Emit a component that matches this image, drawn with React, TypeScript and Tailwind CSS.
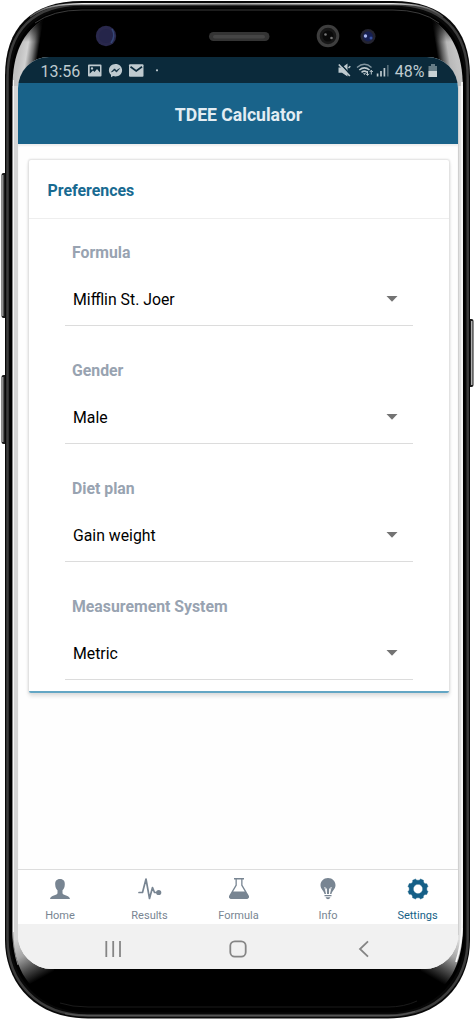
import type { ReactNode } from "react";

function PhoneFrame() {
  return (
    <svg className="absolute inset-0" width="474" height="1019" viewBox="0 0 474 1019" aria-hidden="true">
      <defs>
        <linearGradient id="cornerTL" gradientUnits="userSpaceOnUse" x1="13" y1="50" x2="38" y2="54">
          <stop offset="0" stopColor="#bbb" />
          <stop offset="0.3" stopColor="#c2c2c2" />
          <stop offset="0.55" stopColor="#d2d2d2" />
          <stop offset="0.78" stopColor="#777" />
          <stop offset="1" stopColor="#000" />
        </linearGradient>
        <linearGradient id="cornerTR" gradientUnits="userSpaceOnUse" x1="462" y1="50" x2="437" y2="54">
          <stop offset="0" stopColor="#c8c8c8" />
          <stop offset="0.3" stopColor="#c2c2c2" />
          <stop offset="0.55" stopColor="#b8b8b8" />
          <stop offset="0.78" stopColor="#606060" />
          <stop offset="1" stopColor="#000" />
        </linearGradient>
        <linearGradient id="cornerBL" gradientUnits="userSpaceOnUse" x1="15" y1="938" x2="38" y2="980">
          <stop offset="0" stopColor="#d5d5d5" />
          <stop offset="0.4" stopColor="#a5a5a5" />
          <stop offset="0.7" stopColor="#505050" />
          <stop offset="1" stopColor="#000" />
        </linearGradient>
        <linearGradient id="cornerBR" gradientUnits="userSpaceOnUse" x1="460" y1="938" x2="436" y2="980">
          <stop offset="0" stopColor="#e2e2e2" />
          <stop offset="0.4" stopColor="#a8a8a8" />
          <stop offset="0.7" stopColor="#505050" />
          <stop offset="1" stopColor="#000" />
        </linearGradient>
        <linearGradient id="fadeTop" gradientUnits="userSpaceOnUse" x1="0" y1="19" x2="0" y2="42">
          <stop offset="0" stopColor="#000" />
          <stop offset="1" stopColor="#000" stopOpacity="0" />
        </linearGradient>
        <linearGradient id="edgeTop" x1="0" y1="0" x2="1" y2="0">
          <stop offset="0" stopColor="#444" />
          <stop offset="0.13" stopColor="#eee" />
          <stop offset="0.5" stopColor="#aaa" />
          <stop offset="0.87" stopColor="#eee" />
          <stop offset="1" stopColor="#444" />
        </linearGradient>
      </defs>
      <rect x="1.5" y="173" width="6" height="145" rx="2" fill="#1b1b1b" />
      <rect x="2" y="175" width="1.5" height="141" fill="#909090" />
      <rect x="1.5" y="375" width="6" height="69" rx="2" fill="#1b1b1b" />
      <rect x="2" y="377" width="1.5" height="65" fill="#909090" />
      <rect x="467" y="319" width="6.5" height="68" rx="2" fill="#1b1b1b" />
      <rect x="471" y="321" width="1.5" height="64" fill="#b0b0b0" />
      <path d="M5 76C5 28 31 1 82 1H393C443 1 470 28 470 76V940C470 982 442 1018.500 388 1018.500H88C34 1018.500 5 982 5 940Z" fill="#080808" />
      <path d="M7.500 78C7.500 31 33 4.500 82 4.500H393C442 4.500 467.700 31 467.700 78V939C467.700 980 440 1015.500 388 1015.500H88C36 1015.500 7.500 980 7.500 939Z" fill="none" stroke="#3c3c3c" strokeWidth="2.500" />
      <path d="M30 17C43 6.500 60 3.700 82 3.700H393C415 3.700 431 6.500 443 17" fill="none" stroke="url(#edgeTop)" strokeWidth="1.500" />
      <path d="M10.700 86C10.700 33 36 8.500 82 8.500H393C439 8.500 464.500 33 464.500 86V935C464.500 978 436 1012 388 1012H88C39 1012 10.700 978 10.700 935Z" fill="#000" stroke="#000" />
      <path d="M35 23Q53 10 82 10H393Q422 10 439 23" fill="none" stroke="#3b3b3b" strokeWidth="1" />
      <path d="M12.500 88C12.500 54 22 32 45 19V88Z" fill="url(#cornerTL)" />
      <path d="M12.500 88C12.500 54 22 32 45 19V88Z" fill="url(#fadeTop)" />
      <path d="M462.800 88C462.800 54 453 32 430 19V88Z" fill="url(#cornerTR)" />
      <path d="M462.800 88C462.800 54 453 32 430 19V88Z" fill="url(#fadeTop)" />
      <path d="M12.500 928C12.500 964 26 990 54 1001V928Z" fill="url(#cornerBL)" />
      <path d="M462.800 928C462.800 964 449 990 421 1001V928Z" fill="url(#cornerBR)" />
      <path d="M12.500 86H18V940H13.500Q12.500 930 12.500 920Z" fill="#d5d5d5" />
      <path d="M12.500 86V930Q13 950 18 965" fill="none" stroke="#888" />
      <path d="M13.500 80V932" stroke="#f7f7f7" />
      <path d="M456.500 86H463V920L462 940H456.500Z" fill="#e2e2e2" />
      <path d="M457.500 85V935" stroke="#bdbdbd" strokeWidth="2" />
      <path d="M462 82V928Q461 947 456 962" fill="none" stroke="#fafafa" strokeWidth="1.700" />
      <path d="M60 1003Q72 1007 88 1007H388Q404 1007 417 1001" fill="none" stroke="#1b1b1b" strokeWidth="1" />
      <path d="M65 1013.700Q76 1015.700 88 1015.700H388Q402 1015.700 415 1011.500" fill="none" stroke="#555" strokeWidth="1.200" />
      <circle cx="106" cy="36" r="10.200" fill="#29284c" />
      <circle cx="106" cy="36" r="7" fill="#25254a" />
      <path d="M112 29Q116 36 111 43" fill="none" stroke="#354777" strokeWidth="1.500" />
      <rect x="209" y="32" width="60.500" height="9" rx="4.500" fill="#343434" />
      <rect x="213" y="35" width="52" height="3.500" rx="1.700" fill="#454545" />
      <circle cx="328" cy="36" r="9.800" fill="#171717" stroke="#3e3e3e" strokeWidth="3" />
      <circle cx="328" cy="36" r="5.500" fill="#090909" />
      <circle cx="325.500" cy="34.500" r="1.300" fill="#777" />
      <circle cx="331.500" cy="38" r="1.300" fill="#777" />
      <circle cx="368" cy="36.500" r="7.500" fill="#242430" />
      <circle cx="368" cy="36.500" r="5" fill="#172052" />
      <circle cx="365.500" cy="36" r="1.700" fill="#aab8f0" />
      <circle cx="371" cy="38" r="1.500" fill="#354f9f" />
    </svg>
  );
}

function StatusBar() {
  return (
    <div className="flex h-[26px] shrink-0 items-center bg-[#0b2a3b] pt-[3px] text-[#bfcacf]">
      <span className="ml-[23px] w-[40px] text-[16px] leading-none whitespace-nowrap">13:56</span>
      <svg className="-mt-[1px] ml-[7px]" width="72" height="16" viewBox="0 0 72 16" fill="currentColor">
        <path fillRule="evenodd" d="M1 1.500H12.500Q13.500 1.500 13.500 2.500V12.500Q13.500 13.500 12.500 13.500H1Q0 13.500 0 12.500V2.500Q0 1.500 1 1.500ZM1.700 3.200V10.800L5 7.500L6.500 9L9 6L12 9.500V3.200ZM4 4.200A1.200 1.200 0 1 1 4 6.600A1.200 1.200 0 0 1 4 4.200Z" />
        <path d="M27.500 1C23.700 1 20.900 3.800 20.900 7.200C20.900 9 21.700 10.600 23 11.800V14.200L25.200 13.100C26 13.300 26.700 13.400 27.500 13.400C31.300 13.400 34.100 10.700 34.100 7.200S31.300 1 27.500 1Z" />
        <path d="M23.500 9L26.500 5.800L28.400 7.700L31.500 5.600L28.500 9L26.600 7.200Z" fill="#0b2a3b" stroke="#0b2a3b" strokeWidth=".7" />
        <rect x="41" y="1.300" width="14.500" height="12.400" rx="1" />
        <path d="M42.500 3.700L48.200 8L54 3.700" fill="none" stroke="#0b2a3b" strokeWidth="1.700" />
        <circle cx="69" cy="7.300" r="1.100" />
      </svg>
      <svg className="-mt-[1px] ml-auto" width="52" height="16" viewBox="0 0 52 16" fill="none" stroke="currentColor">
        <path d="M.5 4.500H4L9.500 .5V13.500L4 9.800H.5Z" fill="currentColor" stroke="none" />
        <path d="M2 .2L13 12.500" stroke="#0b2a3b" strokeWidth="1.600" />
        <path d="M.8 1.500L11.800 13" strokeWidth="1.700" />
        <path d="M10.500 5L12.300 3.200" strokeWidth="1.400" />
        <path d="M19 4.500Q26.500 -1.800 33.500 4.500" stroke="#82959f" strokeWidth="1.400" />
        <path d="M21.300 7Q26.500 2.700 31.500 7M23.500 9.300Q26.500 7 29 9.300" strokeWidth="1.600" />
        <path d="M25 10.300L28 10.300L26.500 12Z" fill="currentColor" stroke="none" />
        <path d="M29.500 8V12M28 10.700L29.500 12.500L31 10.700M33.300 11.500V7.500M31.800 9L33.300 7.200L34.800 9" strokeWidth="1" />
        <path d="M39.600 10.500V13.500M43 8V13.500M46.400 5V13.500" strokeWidth="1.700" />
        <path d="M49.800 2V13.500" stroke="#536b77" strokeWidth="1.700" />
      </svg>
      <span className="ml-[5px] text-[16px] leading-none whitespace-nowrap">48%</span>
      <svg className="-mt-[1px] mr-[20px] ml-[3px]" width="10" height="14" viewBox="0 0 10 14">
        <path d="M3 0H7V2H9V13H.500V2H3Z" fill="#667c86" />
        <path d="M.500 7H9V13H.500Z" fill="#c8d1d4" />
      </svg>
    </div>
  );
}

function Preference({ label, value }: { label: string; value: string }) {
  return (
    <div className="h-[118px] px-[36px]">
      <div className="flex h-[66px] items-center pt-[1px] pl-[7.500px] text-[15.800px] font-bold text-[#98a3b1]">{label}</div>
      <div className="flex h-[41px] items-start justify-between border-b border-[#dcdcdc] pr-[15px] pl-[8.500px] text-[15.800px] leading-[30px] text-black">
        <span>{value}</span>
        <svg className="mt-[11px]" width="12" height="6" viewBox="0 0 12 6">
          <path d="M.5 0H11.500L6 5.800Z" fill="#737373" />
        </svg>
      </div>
    </div>
  );
}

const preferences = [
  { label: "Formula", value: "Mifflin St. Joer" },
  { label: "Gender", value: "Male" },
  { label: "Diet plan", value: "Gain weight" },
  { label: "Measurement System", value: "Metric" },
];

const gear =
  "M9.500 2L10.800 3.200H13.200L14.500 2L17.500 3.300V5.100L19 6.700H20.800L22 9.500L20.800 10.800V13.200L22 14.500L20.700 17.500H18.900L17.300 19V20.800L14.500 22L13.200 20.800H10.800L9.500 22L6.500 20.700V18.900L5 17.300H3.200L2 14.500L3.200 13.200V10.800L2 9.500L3.300 6.500H5.100L6.700 5V3.200ZM12 7.300A4.700 4.700 0 1 0 12 16.700A4.700 4.700 0 1 0 12 7.300Z";

const tabs: { label: string; icon: ReactNode }[] = [
  {
    label: "Home",
    icon: <path fill="currentColor" d="M12 2C8.500 2 7 4.300 7.200 7.500C7.300 10.300 8.200 12.100 9.500 13.200V16C9.400 19 2.500 17.800 2 22H22C21.500 17.800 14.600 19 14.500 16V13.200C15.800 12.100 16.700 10.300 16.800 7.500C17 4.300 15.500 2 12 2Z" />,
  },
  {
    label: "Results",
    icon: (
      <>
        <path fill="none" stroke="currentColor" strokeWidth="1.700" strokeLinecap="round" strokeLinejoin="round" d="M1 15.500H4.500L8 2L11.500 21.500L14.500 10.500L16.500 15.500H20" />
        <circle cx="20.700" cy="15.500" r="2.600" fill="currentColor" />
      </>
    ),
  },
  {
    label: "Formula",
    icon: <path fill="currentColor" fillRule="evenodd" d="M7 1H17V2.500H15.500V8L21.700 18.500C22.700 20.300 21.500 22 19.500 22H4.500C2.500 22 1.300 20.300 2.300 18.500L8.500 8V2.500H7ZM9.800 2.500V8.500L6.200 14.500H17.800L14.200 8.500V2.500Z" />,
  },
  {
    label: "Info",
    icon: (
      <>
        <path fill="currentColor" d="M12 1C7.500 1 4.500 4.300 4.500 8.300C4.500 12 7.800 14 8.500 17H15.500C16.200 14 19.500 12 19.500 8.300C19.500 4.300 16.500 1 12 1ZM8.500 18H15.500V19.300H8.500ZM9.500 20.200H14.500Q13.500 22.300 12 22.300T9.500 20.200Z" />
        <path fill="none" stroke="white" strokeWidth=".9" d="M8.800 10L10.500 17V11.500M15.200 10L13.500 17V11.500" />
      </>
    ),
  },
  {
    label: "Settings",
    icon: <path fill="currentColor" fillRule="evenodd" stroke="currentColor" strokeWidth=".4" strokeLinejoin="round" d={gear} />,
  },
];

export default function App() {
  return (
    <main className="relative flex h-[1019px] w-[474px] overflow-hidden bg-white font-['Roboto',sans-serif]">
      <PhoneFrame />
      <div className="relative mt-[57px] ml-[17.500px] flex h-[912px] w-[440px] flex-col overflow-hidden rounded-t-[31px] rounded-b-[34px] bg-[#fefefe]">
        <StatusBar />
        <header className="flex h-[61px] shrink-0 items-center justify-center bg-[#19638a] pt-[3px] pl-[2px] text-[17.600px] font-bold text-[#e3edf3]">
          TDEE Calculator
        </header>
        <div className="h-[725px] shrink-0 px-[11px] pt-[16px] shadow-[inset_0_2px_2px_#eeeeee]">
          <section className="h-[532.500px] w-[420px] rounded-[2px] border-b-2 border-[#63a6c4] bg-white shadow-[0_0_2px_1px_#dedede,0_3px_4px_#dddddd]">
            <h1 className="flex h-[59px] items-center border-b border-[#eeeeee] pt-[3px] pl-[19px] text-[15.900px] font-bold text-[#186a91]">Preferences</h1>
            {preferences.map((item) => (
              <Preference key={item.label} {...item} />
            ))}
          </section>
        </div>
        <nav className="grid h-[55px] shrink-0 grid-cols-[85px_94px_84px_95px_84px] border-t border-[#dddddd] bg-white text-[11px] text-[#788592]">
          {tabs.map((tab) => (
            <div key={tab.label} className={tab.label === "Settings" ? "flex flex-col items-center pt-[7px] text-[#155f87]" : "flex flex-col items-center pt-[7px]"}>
              <svg width="24" height="24" viewBox="0 0 24 24">{tab.icon}</svg>
              <span className="mt-[7px] leading-[16px]">{tab.label}</span>
            </div>
          ))}
        </nav>
        <div className="flex h-[45px] shrink-0 items-center bg-[#f1f1f1] pt-[4px]">
          <svg className="ml-[86px]" width="18" height="18" viewBox="0 0 18 18">
            <path d="M2.300 1V17M9.200 1V17M16 1V17" stroke="#858585" strokeWidth="1.800" />
          </svg>
          <svg className="ml-[107px]" width="18" height="18" viewBox="0 0 18 18">
            <rect x="1.300" y="1.300" width="15.400" height="15.400" rx="4.500" fill="none" stroke="#858585" strokeWidth="1.800" />
          </svg>
          <svg className="ml-[111px]" width="12" height="18" viewBox="0 0 12 18">
            <path d="M10 1.300L2 9L10 16.700" fill="none" stroke="#858585" strokeWidth="1.800" />
          </svg>
        </div>
      </div>
    </main>
  );
}
